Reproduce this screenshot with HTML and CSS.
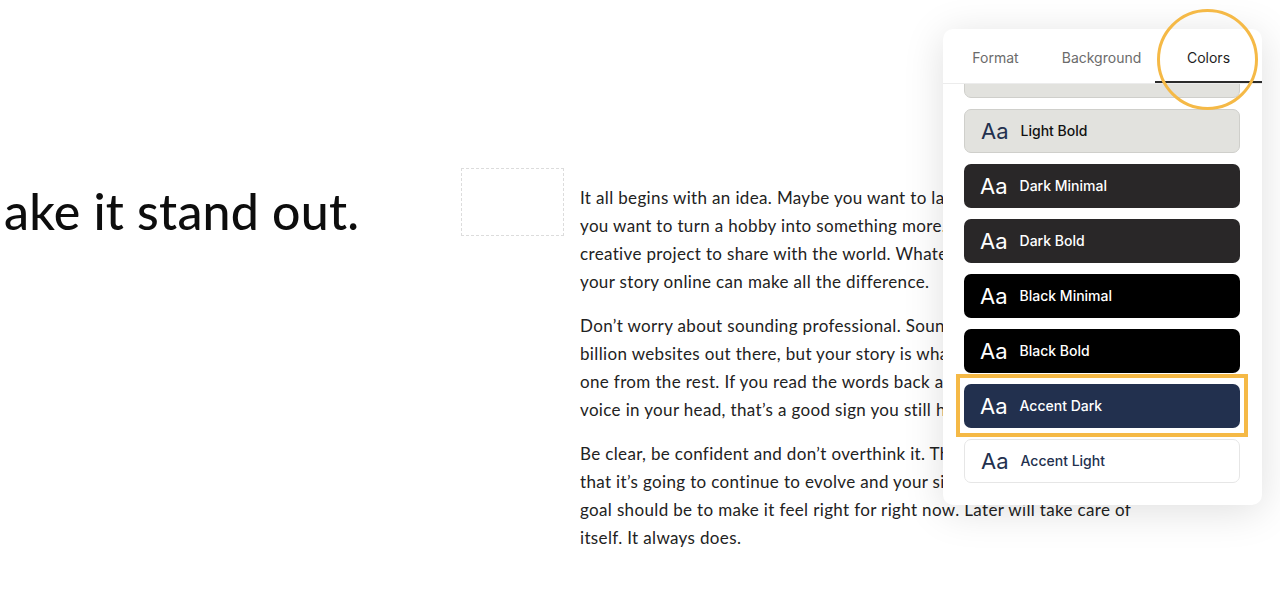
FILE: index.html
```html
<!DOCTYPE html>
<html lang="en">
<head>
<meta charset="utf-8">
<title>Colors</title>
<link rel="stylesheet" href="styles.css">
</head>
<body>
<main class="page">
  <div class="row">
    <h1 class="title">ake it stand out.</h1>
    <div class="placeholder"></div>
    <div class="text">
      <p>It all begins with an idea. Maybe you want to launch a business. Maybe<br>you want to turn a hobby into something more. Or maybe you have a<br>creative project to share with the world. Whatever it is, the way you tell<br>your story online can make all the difference.</p>
      <p>Don’t worry about sounding professional. Sound like you. There are over 1.5<br>billion websites out there, but your story is what’s going to separate this<br>one from the rest. If you read the words back and don’t hear your own<br>voice in your head, that’s a good sign you still have more work to do.</p>
      <p>Be clear, be confident and don’t overthink it. The beauty of your story is<br>that it’s going to continue to evolve and your site can evolve with it. Your<br>goal should be to make it feel right for right now. Later will take care of<br>itself. It always does.</p>
    </div>
  </div>
</main>

<aside class="panel">
  <nav class="tabs">
    <span class="tab">Format</span>
    <span class="tab">Background</span>
    <span class="tab tab-active">Colors</span>
  </nav>
  <div class="list">
    <div class="items">
      <div class="item item-light item-partial"></div>
      <div class="item item-light"><span class="aa">Aa</span><span class="label">Light Bold</span></div>
      <div class="item item-dark"><span class="aa">Aa</span><span class="label">Dark Minimal</span></div>
      <div class="item item-dark"><span class="aa">Aa</span><span class="label">Dark Bold</span></div>
      <div class="item item-black"><span class="aa">Aa</span><span class="label">Black Minimal</span></div>
      <div class="item item-black"><span class="aa">Aa</span><span class="label">Black Bold</span></div>
      <div class="item item-accent-dark"><span class="aa">Aa</span><span class="label">Accent Dark</span></div>
      <div class="item item-accent-light"><span class="aa">Aa</span><span class="label">Accent Light</span></div>
    </div>
  </div>
</aside>

<div class="mark-rect"></div>
<div class="mark-circle"></div>
</body>
</html>
```

FILE: styles.css
```css
html, body {
  margin: 0;
  padding: 0;
  background: #ffffff;
}
body {
  width: 1280px;
  height: 602px;
  overflow: hidden;
  position: relative;
  font-family: "Lato", "Open Sans", sans-serif;
  color: #1c1c1c;
}
.page {
  padding-top: 168px;
}
.row {
  display: flex;
  align-items: flex-start;
}
.title {
  margin: 17px 0 0 0;
  width: 461px;
  flex: none;
  font-family: "Lato", sans-serif;
  font-weight: 500;
  font-size: 50px;
  line-height: 53px;
  letter-spacing: 0.25px;
  color: #0d0d0d;
  white-space: nowrap;
  padding-left: 4px;
  box-sizing: border-box;
}
.placeholder {
  flex: none;
  width: 101px;
  height: 66px;
  border: 1px dashed #dcdcdc;
  margin-right: 16px;
}
.text {
  flex: none;
  width: 578px;
  padding-top: 16px;
}
.text p {
  margin: 0 0 16px 0;
  font-size: 17px;
  line-height: 28px;
  letter-spacing: 0.35px;
  color: #222222;
  white-space: nowrap;
}

.panel {
  position: absolute;
  left: 943px;
  top: 29px;
  width: 319px;
  height: 476px;
  background: #ffffff;
  border-radius: 10px;
  box-shadow: 0 6px 40px rgba(0, 0, 0, 0.13);
  display: flex;
  flex-direction: column;
  overflow: hidden;
  font-family: "Inter", "Liberation Sans", sans-serif;
}
.tabs {
  flex: none;
  display: grid;
  grid-template-columns: 105px 107px 107px;
  height: 54px;
  border-bottom: 1px solid #ececec;
}
.tab {
  display: flex;
  align-items: center;
  justify-content: center;
  font-size: 14px;
  color: #6b6b6b;
  padding-top: 2px;
}
.tab-active {
  color: #1e1e1e;
  box-shadow: inset 0 -2px 0 #2b2b2b;
}
.list {
  flex: 1;
  overflow: hidden;
  padding: 0 22px 0 21px;
}
.items {
  margin-top: -30px;
  display: flex;
  flex-direction: column;
  gap: 11px;
}
.item {
  height: 44px;
  flex: none;
  box-sizing: border-box;
  border-radius: 7px;
  display: flex;
  align-items: center;
  padding-left: 16px;
}
.aa {
  font-size: 22px;
  margin-right: 12px;
  line-height: 26px;
}
.label {
  font-size: 14px;
  font-weight: 500;
  line-height: 18px;
}
.item-light {
  background: #e2e2de;
  border: 1px solid #cfcfcb;
  color: #111111;
}
.item-light .aa {
  color: #22304e;
}
.item-dark {
  background: #292728;
  color: #ffffff;
}
.item-black {
  background: #000000;
  color: #ffffff;
}
.item-accent-dark {
  background: #22304e;
  color: #ffffff;
}
.item-accent-light {
  background: #ffffff;
  border: 1px solid #e6e6e6;
  color: #22304e;
}

.mark-rect {
  position: absolute;
  left: 956px;
  top: 374px;
  width: 292px;
  height: 63px;
  box-sizing: border-box;
  border: 4px solid #f5b946;
}
.mark-circle {
  position: absolute;
  left: 1157px;
  top: 9px;
  width: 101px;
  height: 101px;
  box-sizing: border-box;
  border: 3.5px solid #f5b946;
  border-radius: 50%;
}
```
